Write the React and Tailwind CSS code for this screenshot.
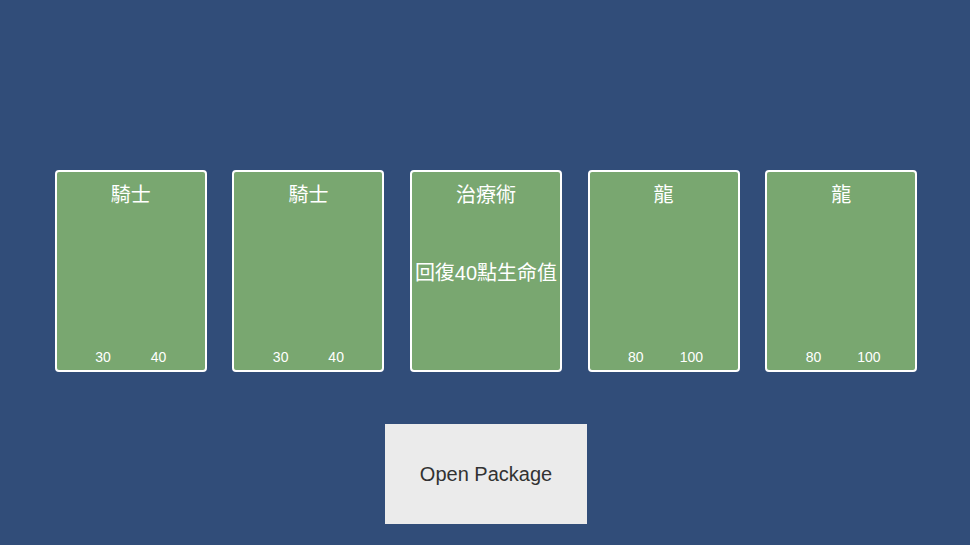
export default function App() {
  const cards = [
    { title: "騎士", desc: "", a: "30", b: "40" },
    { title: "騎士", desc: "", a: "30", b: "40" },
    { title: "治療術", desc: "回復40點生命值", a: "", b: "" },
    { title: "龍", desc: "", a: "80", b: "100" },
    { title: "龍", desc: "", a: "80", b: "100" },
  ];
  return (
    <div
      className="w-[970px] h-[545px] bg-[#314d79] overflow-hidden"
      style={{ fontFamily: '"Liberation Sans", Arial, "Noto Sans CJK TC", sans-serif' }}
    >
      <div className="ml-[54.5px] w-[863px] pt-[170px] flex flex-col items-center">
        <div className="flex gap-[25.6px]">
          {cards.map((c, i) => (
            <div
              key={i}
              className="w-[152px] h-[202px] rounded-[4px] border-2 border-white bg-[#79a770] grid text-white"
            >
              <div className="[grid-area:1/1] self-start pt-[11px] text-center text-[20px] leading-[24px]">
                {c.title}
              </div>
              <div className="[grid-area:1/1] self-center mt-[3px] text-center text-[20px] leading-[24px] whitespace-nowrap -mx-[2px]">
                {c.desc}
              </div>
              <div className="[grid-area:1/1] self-end pb-[5px] flex justify-center gap-[15.5px] text-[14px] leading-[16px]">
                <span className="w-[40px] text-center">{c.a}</span>
                <span className="w-[40px] text-center">{c.b}</span>
              </div>
            </div>
          ))}
        </div>
        <button className="mt-[52px] w-[202px] h-[100px] bg-[#ebebeb] text-[#323232] text-[20px] flex items-center justify-center">
          Open Package
        </button>
      </div>
    </div>
  );
}
